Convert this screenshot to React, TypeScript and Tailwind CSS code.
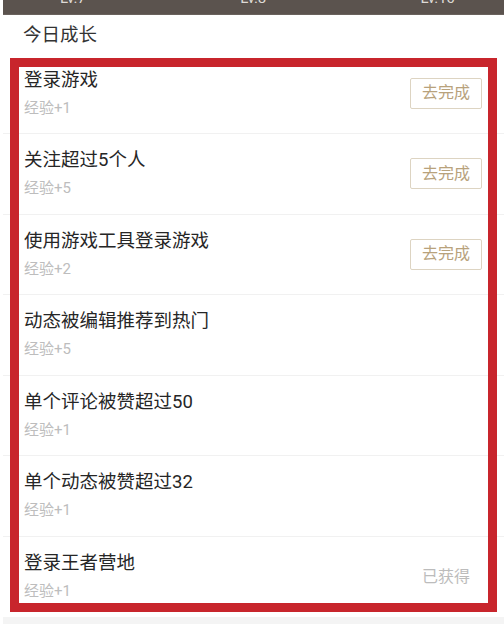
const tasks = [
  { title: "登录游戏", exp: "经验+1", done: false },
  { title: "关注超过5个人", exp: "经验+5", done: false },
  { title: "使用游戏工具登录游戏", exp: "经验+2", done: false },
  { title: "动态被编辑推荐到热门", exp: "经验+5", done: null },
  { title: "单个评论被赞超过50", exp: "经验+1", done: null },
  { title: "单个动态被赞超过32", exp: "经验+1", done: null },
  { title: "登录王者营地", exp: "经验+1", done: true },
];

export default function App() {
  return (
    <div
      className="relative w-[504px] h-[638px] overflow-hidden bg-white pl-[3px]"
      style={{ fontFamily: 'Roboto, "Noto Sans CJK SC", sans-serif' }}
    >
      {/* level bar, scrolled mostly out of view */}
      <div className="h-[15px] bg-[#5b534e] border-b border-[#6a625d] overflow-hidden">
        <div className="flex justify-between pl-[57px] pr-[49px] -mt-[11px] text-[15px] leading-[18px] text-[#dedad6]">
          <span>Lv.7</span>
          <span>Lv.8</span>
          <span>Lv.10</span>
        </div>
      </div>

      <div className="pt-[8px] pb-[5.5px] pl-[20px] text-[18.5px] leading-[25px] text-[#333]">
        今日成长
      </div>

      <div>
        {tasks.map((t, i) => (
          <div
            key={i}
            className={`h-[80.5px] flex items-center justify-between pl-[21px] pr-[22px] ${
              i < tasks.length - 1 ? "border-b border-[#f1f1f1]" : ""
            }`}
          >
            <div className="self-start pt-[14px]">
              <div className="text-[18.5px] leading-[25px] text-[#262626]">{t.title}</div>
              <div className="mt-[5px] text-[15px] leading-[21px] text-[#bdbdbd]">{t.exp}</div>
            </div>
            {t.done === false && (
              <button className="w-[72px] h-[31px] border border-[#ddd4c2] rounded-[2px] text-[16px] text-[#b8a27c] flex items-center justify-center">
                去完成
              </button>
            )}
            {t.done === true && (
              <span className="w-[72px] text-center text-[16px] text-[#bcbcbc]">已获得</span>
            )}
          </div>
        ))}
      </div>

      <div className="h-[7px] bg-[#f4f4f4]" />

      {/* red highlight overlay */}
      <div className="absolute left-[10px] top-[58px] w-[487px] h-[554px] border-[9px] border-[#c8252c] pointer-events-none" />
    </div>
  );
}
